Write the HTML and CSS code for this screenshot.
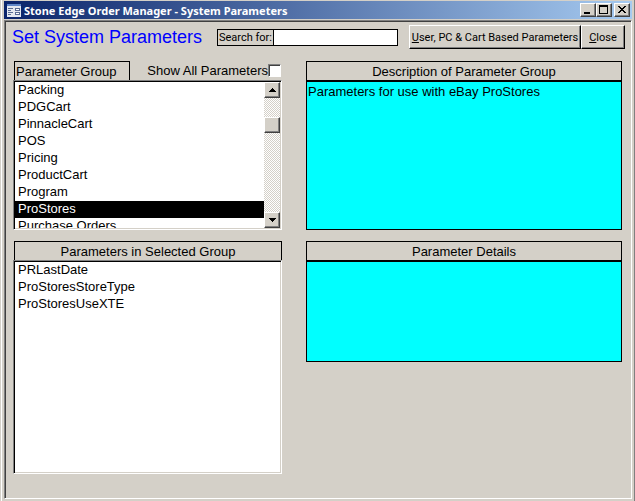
FILE: index.html
```
<!DOCTYPE html>
<html lang="en">
<head>
<meta charset="UTF-8" />
<meta name="viewport" content="width=device-width, initial-scale=1" />
<title>Stone Edge Order Manager - System Parameters</title>
<link rel="stylesheet" href="styles.css">
</head>
<body>
<div class="window">
  <header class="titlebar">
    <svg class="app-icon" width="14" height="13" viewBox="0 0 14 13" aria-hidden="true">
      <rect width="14" height="13" fill="#e4e8f0" />
      <rect width="14" height="2" fill="#5f86c8" />
      <path d="M1 4h5v1H1zM1 6h3v1H1zM1 8h5v1H1zM1 10h3v1H1z" fill="#5a6c94" />
      <path d="M8 4h5v3H8zM8 8h5v3H8z" fill="#5a6c94" />
      <path d="M9 5h3v1H9zM9 9h3v1H9z" fill="#fff" />
    </svg>
    <h1 class="titlebar-text">Stone Edge Order Manager - System Parameters</h1>
    <div class="caption-buttons">
      <button type="button" class="caption-btn" aria-label="Minimize">
        <svg width="12" height="10" viewBox="0 0 12 10"><path d="M2 7h6v2H2z" /></svg>
      </button>
      <button type="button" class="caption-btn" aria-label="Maximize">
        <svg width="12" height="10" viewBox="0 0 12 10"><path d="M1 0h9v9H1zM2 2v6h7V2z" fill-rule="evenodd" /></svg>
      </button>
      <button type="button" class="caption-btn close" aria-label="Close window">
        <svg width="12" height="10" viewBox="0 0 12 10"><path d="M2 1h2v1h1v1h2V2h1V1h2v1H9v1H8v1H7v1h1v1h1v1h1v1H8V7H7V6H5v1H4v1H2V7h1V6h1V5h1V4H4V3H3V2H2z" /></svg>
      </button>
    </div>
  </header>

  <main class="pane">
    <div class="toolbar">
      <h2 class="heading">Set System Parameters</h2>
      <form class="search">
        <label for="search">Search for:</label>
        <input type="text" id="search" />
      </form>
      <div class="actions">
        <button type="button" class="btn btn-wide"><u>U</u>ser, PC &amp; Cart Based Parameters</button>
        <button type="button" class="btn"><u>C</u>lose</button>
      </div>
    </div>

    <div class="panels">
      <section class="panel">
        <div class="panel-top">
          <label class="tab" for="groups">Parameter Group</label>
          <label class="show-all" for="show-all">Show All Parameters</label>
          <input type="checkbox" id="show-all" class="check" />
        </div>
        <div class="listbox groups">
          <select id="groups" size="8">
            <option>Packing</option>
            <option>PDGCart</option>
            <option>PinnacleCart</option>
            <option>POS</option>
            <option>Pricing</option>
            <option>ProductCart</option>
            <option>Program</option>
            <option selected>ProStores</option>
            <option>Purchase Orders</option>
          </select>
          <div class="scrollbar">
            <button type="button" class="scroll-btn" aria-label="Scroll up">
              <svg width="7" height="4" viewBox="0 0 7 4"><path d="M3 0h1v1h1v1h1v1h1v1H0V3h1V2h1V1h1z" /></svg>
            </button>
            <div class="track"><div class="thumb"></div></div>
            <button type="button" class="scroll-btn" aria-label="Scroll down">
              <svg width="7" height="4" viewBox="0 0 7 4"><path d="M0 0h7v1H6v1H5v1H4v1H3V3H2V2H1V1H0z" /></svg>
            </button>
          </div>
        </div>
      </section>

      <section class="panel">
        <h3 class="panel-title">Description of Parameter Group</h3>
        <div class="info description">Parameters for use with eBay ProStores</div>
      </section>

      <section class="panel">
        <label class="panel-title" for="params">Parameters in Selected Group</label>
        <div class="listbox params">
          <select id="params" size="12">
            <option>PRLastDate</option>
            <option>ProStoresStoreType</option>
            <option>ProStoresUseXTE</option>
          </select>
        </div>
      </section>

      <section class="panel">
        <h3 class="panel-title">Parameter Details</h3>
        <div class="info details"></div>
      </section>
    </div>
  </main>
</div>
</body>
</html>
```
FILE: styles.css
```
* {
  box-sizing: border-box;
}

body {
  margin: 0;
  background: #d4d0c8;
  color: #000;
  font-family: "Liberation Sans", Arial, sans-serif;
  font-size: 13px;
  line-height: 17px;
}

h1, h2, h3 {
  margin: 0;
  font-weight: normal;
}

button, input, select {
  margin: 0;
  padding: 0;
  border-radius: 0;
  font: inherit;
  color: inherit;
}

button svg {
  display: block;
}

/* window frame */
.window {
  display: flex;
  flex-direction: column;
  min-height: 100vh;
  padding: 1px 2px 2px 4px;
  border-right: 1px solid #808080;
  box-shadow: inset 1px 0 #d4d0c8, inset 2px 0 #fff;
}

.titlebar {
  display: flex;
  align-items: center;
  height: 18px;
  padding: 0 2px 0 3px;
  background: linear-gradient(to right, #0a246a, #a6caf0);
}

.app-icon {
  flex: none;
}

.titlebar-text {
  flex: 1;
  margin-left: 3px;
  font-family: "Noto Sans", Tahoma, sans-serif;
  font-size: 11px;
  font-weight: bold;
  color: #fff;
  white-space: nowrap;
}

.caption-buttons {
  display: flex;
}

.caption-btn {
  width: 16px;
  height: 14px;
  padding: 1px;
  background: #d4d0c8;
  border: 1px solid;
  border-color: #fff #404040 #404040 #fff;
  box-shadow: inset -1px -1px #808080;
}

.caption-btn.close {
  margin-left: 2px;
}

.pane {
  flex: 1;
  margin-top: 1px;
  border: 1px solid;
  border-color: #808080 #fff #fff #808080;
  box-shadow: inset 1px 1px #404040;
}

/* top row */
.toolbar {
  display: flex;
  align-items: center;
  padding: 4px 6px 0 7px;
}

.heading {
  flex: 1;
  font-size: 18px;
  line-height: 24px;
  color: #0000ff;
  white-space: nowrap;
}

.search {
  display: flex;
  width: 181px;
  height: 17px;
  border: 1px solid #000;
  font-family: Roboto, Arial, sans-serif;
  font-size: 11px;
  line-height: 15px;
}

.search label {
  padding: 0 1px;
  border-right: 1px solid #000;
  white-space: nowrap;
}

.search input {
  flex: 1;
  min-width: 0;
  border: 0;
  background: #fff;
}

.actions {
  display: flex;
  margin-left: 11px;
}

.btn {
  width: 44px;
  height: 24px;
  background: #d4d0c8;
  border: 1px solid;
  border-color: #fff #000 #000 #fff;
  box-shadow: inset -1px -1px #808080;
  font-family: Roboto, Arial, sans-serif;
  font-size: 11px;
  white-space: nowrap;
}

.btn-wide {
  width: 172px;
}

/* panels */
.panels {
  display: grid;
  grid-template-columns: 268fr 316fr;
  gap: 11px 24px;
  align-items: start;
  padding: 12px 9px 24px 9px;
}

.panel-top {
  display: flex;
  align-items: center;
  height: 19px;
}

.tab {
  width: 116px;
  height: 19px;
  padding: 1px;
  border: 1px solid #000;
  border-bottom: 0;
}

.show-all {
  flex: 1;
  text-align: right;
  white-space: nowrap;
}

.check {
  appearance: none;
  width: 13px;
  height: 13px;
  margin-right: 1px;
  background: #fff;
  border: 1px solid;
  border-color: #808080 #fff #fff #808080;
  box-shadow: inset 1px 1px #404040;
}

.panel-title {
  display: block;
  height: 19px;
  padding-top: 1px;
  border: 1px solid #000;
  border-bottom: 0;
  font-size: 13px;
  text-align: center;
}

.listbox {
  display: flex;
  margin-left: -1px;
  padding: 1px;
  background: #fff;
  border: 1px solid;
  border-color: #808080 #fff #fff #808080;
  box-shadow: inset 1px 1px #000, inset -1px -1px #d4d0c8;
}

.listbox select {
  flex: 1;
  min-width: 0;
  height: 100%;
  border: 0;
  outline: 0;
  background: #fff;
  overflow: hidden;
}

.listbox option {
  min-height: 17px;
  height: 17px;
  padding: 0 3px;
  line-height: 17px;
}

.listbox option:checked {
  background: #000;
  color: #fff;
}

.groups {
  height: 150px;
}

.params {
  height: 214px;
}

.scrollbar {
  display: flex;
  flex-direction: column;
  width: 16px;
}

.scroll-btn, .thumb {
  background: #d4d0c8;
  border: 1px solid;
  border-color: #fff #404040 #404040 #fff;
  box-shadow: inset -1px -1px #808080;
}

.scroll-btn {
  display: flex;
  align-items: center;
  justify-content: center;
  height: 16px;
}

.track {
  flex: 1;
  padding-top: 19px;
  background: repeating-conic-gradient(#fff 0 25%, #d4d0c8 0 50%) 0 0 / 2px 2px;
}

.thumb {
  height: 16px;
}

.info {
  padding: 1px;
  background: #00ffff;
  border: 1px solid #000;
  border-top-width: 2px;
}

.description {
  height: 150px;
}

.details {
  height: 102px;
}
```
